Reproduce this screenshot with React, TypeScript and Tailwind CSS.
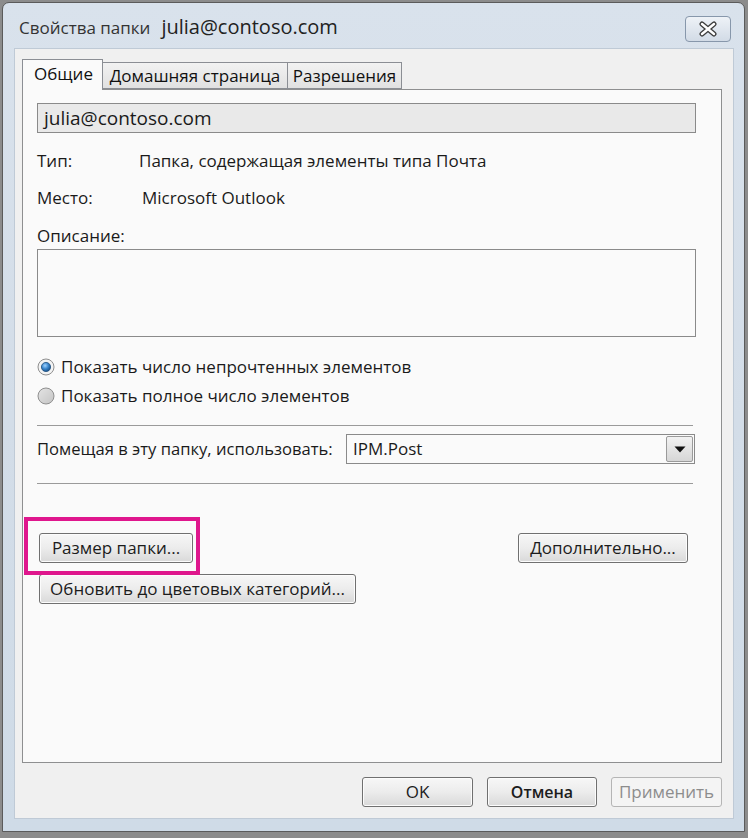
import React from "react";

const font = { fontFamily: '"Open Sans", "Noto Sans", "DejaVu Sans", sans-serif' };

function Btn({ children, className = "", disabled = false }: { children: React.ReactNode; className?: string; disabled?: boolean }) {
  return (
    <div
      className={
        "h-[30px] flex items-center justify-center rounded-[3px] border " +
        (disabled
          ? "border-[#b5b5b5] bg-[#f4f4f4] text-[#8d8d8d] "
          : "border-[#707070] bg-linear-to-b from-[#f7f7f7] via-[#ececec] to-[#d9d9d9] text-[#1c1c1c] shadow-[inset_0_0_0_1px_#fcfcfc] ") +
        className
      }
    >
      {children}
    </div>
  );
}

function Radio({ checked }: { checked: boolean }) {
  return (
    <svg width="18" height="18" viewBox="0 0 18 18">
      <defs>
        <linearGradient id={checked ? "rg1" : "rg0"} x1="0" y1="0" x2="1" y2="1">
          <stop offset="0" stopColor="#e4e4e4" />
          <stop offset="1" stopColor="#c4c4c4" />
        </linearGradient>
        <radialGradient id="blue" cx="0.4" cy="0.35" r="0.7">
          <stop offset="0" stopColor="#9fd3ff" />
          <stop offset="0.5" stopColor="#3b86cc" />
          <stop offset="1" stopColor="#134a80" />
        </radialGradient>
      </defs>
      <circle cx="9" cy="9" r="8" fill={checked ? "#f3f3f3" : "url(#rg0)"} stroke="#8f8f8f" strokeWidth="1" />
      {checked && <circle cx="9" cy="9" r="4.6" fill="url(#blue)" stroke="#1e4f7f" strokeWidth="0.8" />}
    </svg>
  );
}

export default function App() {
  return (
    <div className="w-[748px] h-[838px] bg-[#8c8c8c] pt-[2px] pl-[2px] overflow-hidden" style={font}>
      <div className="w-[743px] h-[830px] border border-[#5b5b5b] rounded-t-[7px] bg-linear-to-b from-[#d9e2ec] via-[#d3dde8] to-[#cfdbe7] flex flex-col">
        {/* title bar */}
        <div className="h-[45px] flex items-center pl-[16px] pr-[13px]">
          <span className="text-[17px] text-[#333] mt-[4px]">Свойства папки</span>
          <span className="text-[20px] text-[#222] ml-[11px] mt-[2px]">julia@contoso.com</span>
          <div className="ml-auto w-[46px] h-[26px] mt-[6px] rounded-[4px] border border-[#8797ab] bg-linear-to-b from-[#eef2f7] to-[#d2dbe6] flex items-center justify-center">
            <svg width="20" height="16" viewBox="0 0 20 16">
              <path d="M4 3 L16 13 M16 3 L4 13" stroke="#3d3d3d" strokeWidth="5" strokeLinecap="round" />
              <path d="M4 3 L16 13 M16 3 L4 13" stroke="#ffffff" strokeWidth="2.4" strokeLinecap="round" />
            </svg>
          </div>
        </div>
        {/* client */}
        <div className="ml-[11px] mr-[10px] mb-[12px] flex-1 bg-[#f0f0f0] border border-[#bfcad6] pt-[10px] px-[7px] flex flex-col">
          {/* tabs */}
          <div className="flex items-end h-[30px] relative z-10 text-[17px] text-[#111]">
            <div className="w-[81px] h-[31px] border border-b-0 border-[#8b8e94] bg-[#fafafa] flex items-center justify-center -mb-[1px] pb-[2px] pl-[2px]">
              Общие
            </div>
            <div className="w-[185px] h-[27px] border border-l-0 border-[#8b8e94] bg-linear-to-b from-[#f2f2f2] to-[#e1e1e1] flex items-center justify-center">
              Домашняя страница
            </div>
            <div className="w-[114px] h-[27px] border border-l-0 border-[#8b8e94] bg-linear-to-b from-[#f2f2f2] to-[#e1e1e1] flex items-center justify-center">
              Разрешения
            </div>
          </div>
          {/* panel */}
          <div className="w-[700px] h-[674px] border border-[#8e8f90] bg-[#fafafa] relative flex flex-col pl-[14px] text-[17px] text-[#1a1a1a]">
            <div className="mt-[13px] w-[659px] h-[30px] border border-[#8a8a8a] bg-[#e9e9e9] flex items-center pl-[6px] text-[19px] text-[#1a1a1a]">
              julia@contoso.com
            </div>
            <div className="mt-[18px] h-[20px] flex items-center">
              <span className="w-[102px]">Тип:</span>
              <span>Папка, содержащая элементы типа Почта</span>
            </div>
            <div className="mt-[17px] h-[20px] flex items-center">
              <span className="w-[105px]">Место:</span>
              <span>Microsoft Outlook</span>
            </div>
            <div className="mt-[18px] h-[20px] flex items-center">Описание:</div>
            <div className="mt-[3px] w-[659px] h-[88px] border border-[#8a8a8a] bg-[#fafafa]" />
            <div className="mt-[20px] h-[20px] flex items-center">
              <Radio checked={true} />
              <span className="ml-[6px]">Показать число непрочтенных элементов</span>
            </div>
            <div className="mt-[9px] h-[20px] flex items-center">
              <Radio checked={false} />
              <span className="ml-[6px]">Показать полное число элементов</span>
            </div>
            <div className="mt-[19px] w-[656px] h-[1px] bg-[#9a9a9a]" />
            <div className="mt-[8px] h-[30px] flex items-center">
              <span className="w-[309px] text-[16.6px]">Помещая в эту папку, использовать:</span>
              <div className="w-[349px] h-[30px] border border-[#8a8a8a] bg-[#fafafa] flex items-center pl-[6px] pr-[1px]">
                <span className="text-[17px]">IPM.Post</span>
                <div className="ml-auto w-[27px] h-[26px] rounded-[2px] border border-[#9a9a9a] bg-linear-to-b from-[#f2f2f2] to-[#d6d6d6] flex items-center justify-center">
                  <svg width="12" height="7" viewBox="0 0 12 7">
                    <path d="M0.5 0.5 L11.5 0.5 L6 6.5 Z" fill="#111" />
                  </svg>
                </div>
              </div>
            </div>
            <div className="mt-[19px] w-[656px] h-[1px] bg-[#9a9a9a]" />
            <div className="mt-[49px] flex items-center pl-[2px]">
              <Btn className="w-[154px] text-[17px]">Размер папки...</Btn>
              <Btn className="w-[170px] ml-[325px] text-[17px]">Дополнительно...</Btn>
            </div>
            <div className="mt-[11px] flex pl-[2px]">
              <Btn className="w-[317px] text-[17px]">Обновить до цветовых категорий...</Btn>
            </div>
            {/* highlight */}
            <div className="absolute left-[1px] top-[427px] w-[176px] h-[58px] border-[4px] border-[#df178d]" />
          </div>
          {/* footer */}
          <div className="mt-[14px] flex justify-end gap-[14px] pr-[4px]">
            <Btn className="w-[111px] text-[17px]">OK</Btn>
            <Btn className="w-[110px] text-[16px] font-semibold">Отмена</Btn>
            <Btn className="w-[111px] text-[17px]" disabled>Применить</Btn>
          </div>
        </div>
      </div>
    </div>
  );
}
